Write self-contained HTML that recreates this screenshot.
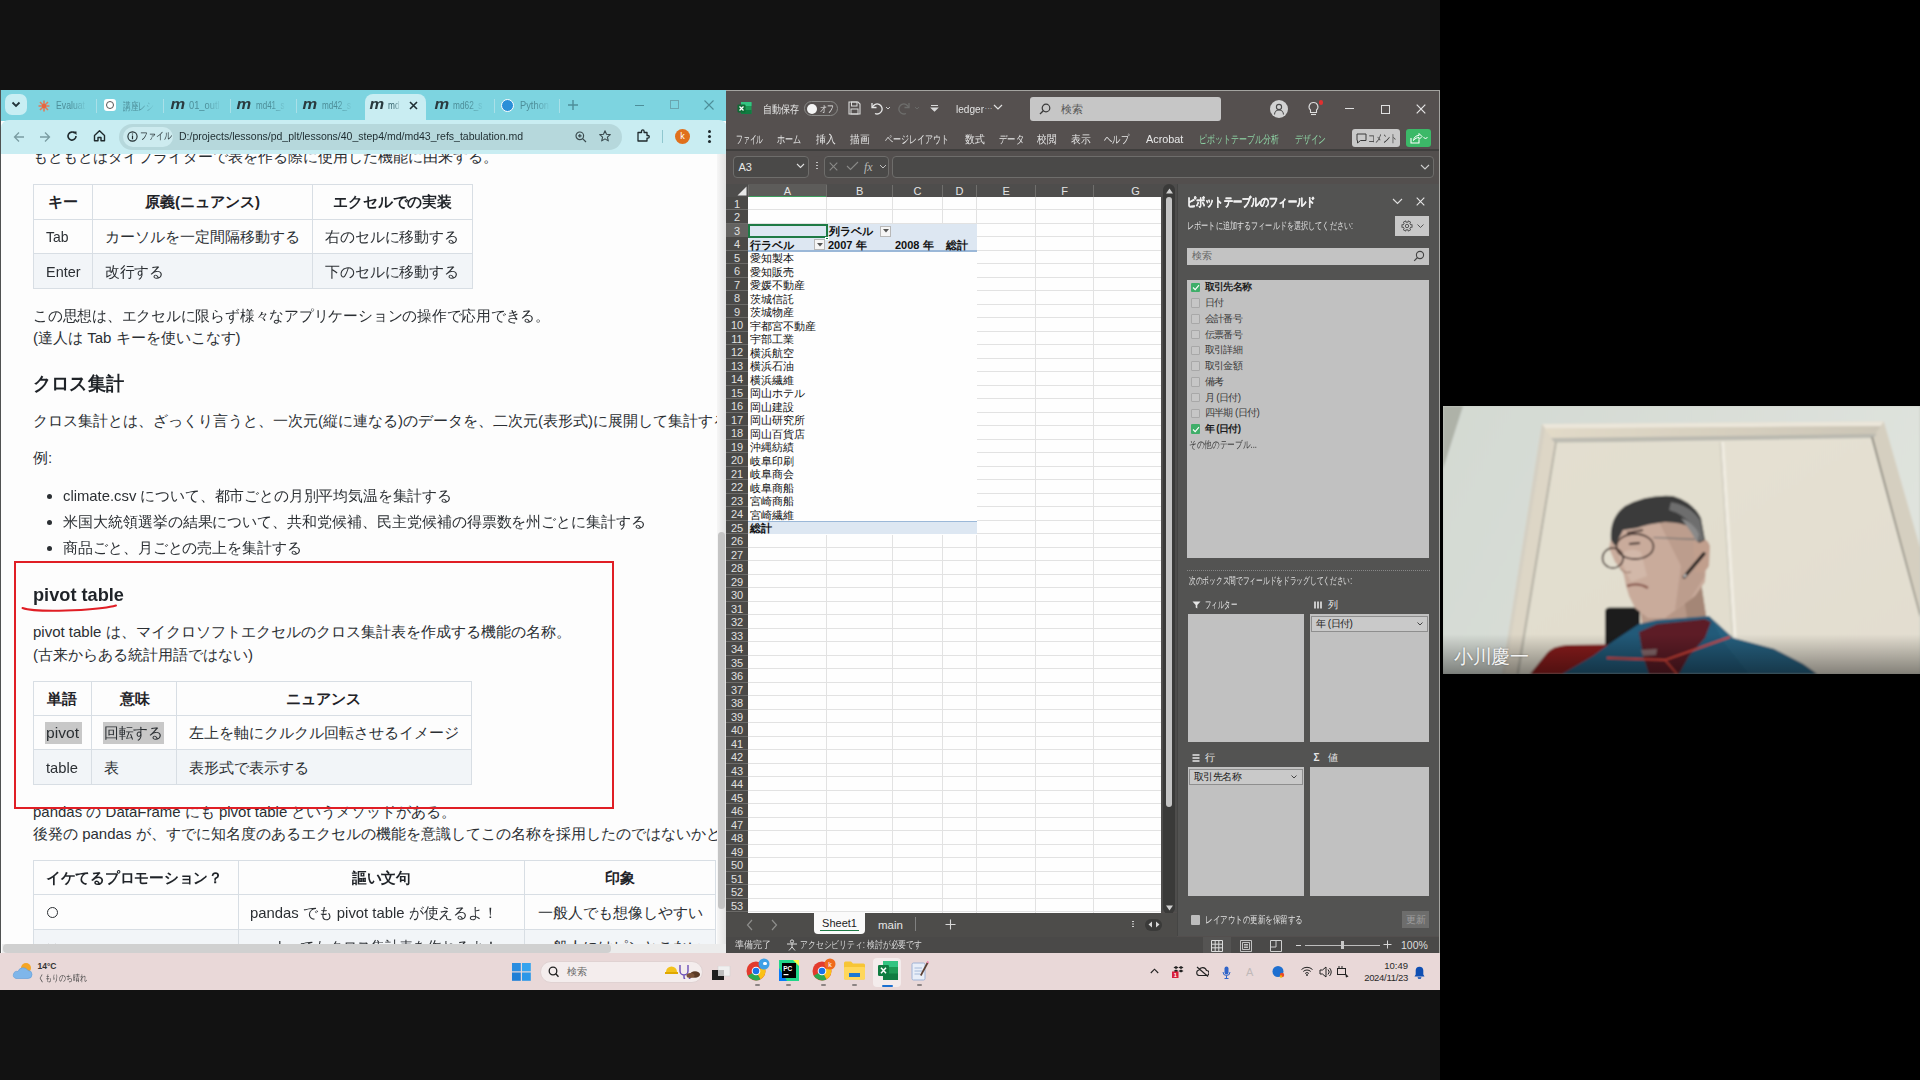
<!DOCTYPE html>
<html><head><meta charset="utf-8">
<style>
*{box-sizing:border-box}
html,body{margin:0;padding:0}
body{width:1920px;height:1080px;background:#000;position:relative;overflow:hidden;font-family:"Liberation Sans",sans-serif}
.a{position:absolute}
.nw{white-space:nowrap}
/* browser */
#br{left:0;top:90px;width:726px;height:863px;background:#fdfdfd;overflow:hidden;border-left:1px solid #505252}
#tabs{left:0;top:0;width:726px;height:31px;background:#7dd4e0}
#tool{left:0;top:30px;width:726px;height:34px;background:#c9edf2;border-radius:8px 8px 0 0}
.tt{font-size:11px;color:#4d8e99;top:9px;-webkit-mask-image:linear-gradient(90deg,#000 55%,rgba(0,0,0,0.15) 100%)}
.sep{width:1px;height:14px;top:9px;background:#a9e0e8}
.mi{font-family:"Liberation Sans",sans-serif;font-style:italic;font-weight:bold;font-size:15px;color:#2a3a3e;top:5px;letter-spacing:-1px;transform:scaleX(1.1)}
#content{left:0;top:64px;width:725px;height:799px;overflow:hidden;color:#2b2f33;font-size:15px}
.ln{position:absolute;white-space:nowrap;line-height:20px}
table.md{position:absolute;border-collapse:collapse;font-size:15px;color:#2b2f33}
table.md td,table.md th{border:1px solid #d5dbe0;padding:0 12px;height:34.5px;white-space:nowrap}
table.md th{font-weight:bold;text-align:center}
table.md tr.ev td{background:#f3f6f8}
/* excel */
#xl{left:726px;top:90px;width:714px;height:863px;background:#534f4e;border-top:1px solid #a4a4a0;border-right:1px solid #a4a4a0;overflow:hidden;color:#e8e8e8}
.xt{font-size:11px;color:#e6e6e6}
/* taskbar */
#tb{left:0;top:953px;width:1440px;height:37px;background:#e9d8d8}
</style></head>
<body>
<div class="a" style="left:0;top:0;width:1440px;height:90px;background:#121212"></div>
<div class="a" style="left:0;top:990px;width:1440px;height:90px;background:#121212"></div>

<!-- ================= BROWSER ================= -->
<div id="br" class="a">
<div id="tabs" class="a">
  <div class="a" style="left:4px;top:4px;width:22px;height:21px;border-radius:7px;background:#c8eef3"></div>
  <svg class="a" style="left:10px;top:11px" width="10" height="7" viewBox="0 0 10 7"><path d="M1.5 1.5 L5 5 L8.5 1.5" stroke="#22343a" stroke-width="1.8" fill="none"></path></svg>
  <svg class="a" style="left:37px;top:10px" width="12" height="12" viewBox="0 0 12 12"><g stroke="#e07a5a" stroke-width="1.6"><path d="M6 0.5V11.5M0.5 6H11.5M2 2L10 10M10 2L2 10"></path></g><circle cx="6" cy="6" r="2.2" fill="#e8653f"></circle></svg>
  <div class="a tt nw" style="left: 55px; transform: scaleX(0.7901); transform-origin: 0px 0px;">Evaluat</div>
  <div class="a sep" style="left:95px"></div>
  <div class="a" style="left:103px;top:9px;width:12px;height:12px;border-radius:3px;background:#fff"></div>
  <div class="a" style="left:105px;top:11px;width:8px;height:8px;border-radius:50%;border:1.5px solid #555"></div>
  <div class="a tt nw" style="left: 122px; transform: scaleX(0.7045); transform-origin: 0px 0px;">講座レシ</div>
  <div class="a sep" style="left:162px"></div>
  <div class="a mi" style="left:170px">m</div>
  <div class="a tt nw" style="left: 188px; transform: scaleX(0.8478); transform-origin: 0px 0px;">01_outl</div>
  <div class="a sep" style="left:229px"></div>
  <div class="a mi" style="left:236px">m</div>
  <div class="a tt nw" style="left: 255px; transform: scaleX(0.7281); transform-origin: 0px 0px;">md41_s</div>
  <div class="a sep" style="left:295px"></div>
  <div class="a mi" style="left:302px">m</div>
  <div class="a tt nw" style="left: 321px; transform: scaleX(0.7409); transform-origin: 0px 0px;">md42_s</div>
  <div class="a" style="left:364px;top:4px;width:61px;height:28px;border-radius:8px 8px 0 0;background:#c9edf2"></div>
  <div class="a mi" style="left:369px">m</div>
  <div class="a tt nw" style="left: 387px; color: rgb(58, 103, 112); transform: scaleX(0.7526); transform-origin: 0px 0px;">md</div>
  <svg class="a" style="left:408px;top:11px" width="9" height="9" viewBox="0 0 9 9"><path d="M1 1L8 8M8 1L1 8" stroke="#1f2e33" stroke-width="1.6"></path></svg>
  <div class="a mi" style="left:434px">m</div>
  <div class="a tt nw" style="left: 452px; transform: scaleX(0.7537); transform-origin: 0px 0px;">md62_s</div>
  <div class="a sep" style="left:493px"></div>
  <div class="a" style="left:500px;top:9px;width:13px;height:13px;border-radius:50%;background:#2a8fd8;border:1.5px solid #fff"></div>
  <div class="a tt nw" style="left: 519px; transform: scaleX(0.8467); transform-origin: 0px 0px;">Python</div>
  <div class="a sep" style="left:558px"></div>
  <svg class="a" style="left:567px;top:10px" width="10" height="10" viewBox="0 0 10 10"><path d="M5 0V10M0 5H10" stroke="#4d8e99" stroke-width="1.4"></path></svg>
  <div class="a" style="left:634px;top:15px;width:9px;height:1px;background:#4d8e99"></div>
  <div class="a" style="left:669px;top:10px;width:9px;height:9px;border:1px solid #6aa6b0"></div>
  <svg class="a" style="left:703px;top:10px" width="10" height="10" viewBox="0 0 10 10"><path d="M0.5 0.5L9.5 9.5M9.5 0.5L0.5 9.5" stroke="#4d8e99" stroke-width="1.1"></path></svg>
 </div>
 <div id="tool" class="a">
  <svg class="a" style="left:12px;top:11px" width="12" height="12" viewBox="0 0 12 12"><path d="M11 6H1.5M6 1.5L1.5 6L6 10.5" stroke="#7a9ca2" stroke-width="1.3" fill="none"></path></svg>
  <svg class="a" style="left:38px;top:11px" width="12" height="12" viewBox="0 0 12 12"><path d="M1 6H10.5M6 1.5L10.5 6L6 10.5" stroke="#7a9ca2" stroke-width="1.3" fill="none"></path></svg>
  <svg class="a" style="left:65px;top:10px" width="12" height="12" viewBox="0 0 12 12"><path d="M10 6A4 4 0 1 1 8.8 3.2" stroke="#1f2a2d" stroke-width="1.6" fill="none"></path><path d="M7 1.5L10.5 1.5L10.5 5Z" fill="#1f2a2d"></path></svg>
  <svg class="a" style="left:92px;top:9px" width="13" height="13" viewBox="0 0 13 13"><path d="M1.5 6.5L6.5 1.8L11.5 6.5V11.8H8V8.5H5V11.8H1.5Z" stroke="#1f2a2d" stroke-width="1.4" fill="none" stroke-linejoin="round"></path></svg>
  <div class="a" style="left:118px;top:4px;width:503px;height:26px;border-radius:13px;background:#b6d8dc"></div>
  <div class="a" style="left:122px;top:7px;width:50px;height:20px;border-radius:10px;background:#cdebef"></div>
  <svg class="a" style="left:126px;top:11px" width="11" height="11" viewBox="0 0 11 11"><circle cx="5.5" cy="5.5" r="4.6" stroke="#1f2a2d" stroke-width="1.1" fill="none"></circle><path d="M5.5 4.5V8.2M5.5 2.6V3.4" stroke="#1f2a2d" stroke-width="1.2"></path></svg>
  <div class="a nw" style="left: 139px; top: 9px; font-size: 10px; color: rgb(31, 42, 45); transform: scaleX(0.8); transform-origin: 0px 0px;">ファイル</div>
  <div class="a nw" style="left: 178px; top: 10px; font-size: 11.5px; color: rgb(29, 43, 47); transform: scaleX(0.9136); transform-origin: 0px 0px;">D:/projects/lessons/pd_plt/lessons/40_step4/md/md43_refs_tabulation.md</div>
  <svg class="a" style="left:574px;top:11px" width="12" height="12" viewBox="0 0 12 12"><circle cx="4.8" cy="4.8" r="3.8" stroke="#3a4a4e" stroke-width="1.2" fill="none"></circle><path d="M7.6 7.6L11 11M3 4.8H6.6M4.8 3V6.6" stroke="#3a4a4e" stroke-width="1.2"></path></svg>
  <svg class="a" style="left:598px;top:10px" width="12" height="12" viewBox="0 0 12 12"><path d="M6 0.8L7.5 4.3L11.3 4.6L8.4 7.1L9.3 10.9L6 8.9L2.7 10.9L3.6 7.1L0.7 4.6L4.5 4.3Z" stroke="#3a4a4e" stroke-width="1.1" fill="none" stroke-linejoin="round"></path></svg>
  <svg class="a" style="left:635px;top:9px" width="14" height="14" viewBox="0 0 14 14"><path d="M2 3.5H5.5V2.2A1.3 1.3 0 0 1 8.1 2.2V3.5H11V6.5H12A1.3 1.3 0 0 1 12 9.1H11V12H2Z" stroke="#1f2a2d" stroke-width="1.3" fill="none" stroke-linejoin="round"></path></svg>
  <div class="a" style="left:661px;top:10px;width:1px;height:13px;background:#8fc7cf"></div>
  <div class="a" style="left:674px;top:9px;width:15px;height:15px;border-radius:50%;background:#e0701c;color:#fff;font-size:9px;text-align:center;line-height:15px">k</div>
  <div class="a" style="left:707px;top:10px;width:3px;height:3px;border-radius:50%;background:#1f2a2d;box-shadow:0 5px 0 #1f2a2d,0 10px 0 #1f2a2d"></div>
 </div>
 <div id="content" class="a">
<div class="ln" style="left:32px;top:-7.5px;font-size:15px;line-height:20px;">もともとはタイプライターで表を作る際に使用した機能に由来する。</div>
<div class="a" style="left:32px;top:30.5px;width:439.5px;height:103.8px;background:#fdfdfd"></div>
<div class="a" style="left:32px;top:99.7px;width:439.5px;height:34.6px;background:#f2f5f8"></div>
<div class="a" style="left:32px;top:30.0px;width:440.0px;height:1.0px;background:#d8dee4"></div>
<div class="a" style="left:32px;top:64.6px;width:440.0px;height:1.0px;background:#d8dee4"></div>
<div class="a" style="left:32px;top:99.2px;width:440.0px;height:1.0px;background:#d8dee4"></div>
<div class="a" style="left:32px;top:133.8px;width:440.0px;height:1.0px;background:#d8dee4"></div>
<div class="a" style="left:31.5px;top:30.5px;width:1.0px;height:103.8px;background:#d8dee4"></div>
<div class="a" style="left:90.5px;top:30.5px;width:1.0px;height:103.8px;background:#d8dee4"></div>
<div class="a" style="left:311.0px;top:30.5px;width:1.0px;height:103.8px;background:#d8dee4"></div>
<div class="a" style="left:471.0px;top:30.5px;width:1.0px;height:103.8px;background:#d8dee4"></div>
<div class="ln" style="left: 46.5px; top: 38px; font-size: 15px; line-height: 20px; font-weight: bold; color: rgb(31, 35, 40); transform: scaleX(1); transform-origin: 0px 0px;">キー</div>
<div class="ln" style="left: 144px; top: 38px; font-size: 15px; line-height: 20px; font-weight: bold; color: rgb(31, 35, 40); transform: scaleX(1); transform-origin: 0px 0px;">原義(ニュアンス)</div>
<div class="ln" style="left: 332px; top: 38px; font-size: 15px; line-height: 20px; font-weight: bold; color: rgb(31, 35, 40); transform: scaleX(0.9917); transform-origin: 0px 0px;">エクセルでの実装</div>
<div class="ln" style="left: 44.5px; top: 73px; font-size: 15px; line-height: 20px; transform: scaleX(0.9302); transform-origin: 0px 0px;">Tab</div>
<div class="ln" style="left: 104px; top: 73px; font-size: 15px; line-height: 20px; transform: scaleX(1); transform-origin: 0px 0px;">カーソルを一定間隔移動する</div>
<div class="ln" style="left: 324px; top: 73px; font-size: 15px; line-height: 20px; transform: scaleX(0.9926); transform-origin: 0px 0px;">右のセルに移動する</div>
<div class="ln" style="left: 44.5px; top: 107.5px; font-size: 15px; line-height: 20px; transform: scaleX(0.9621); transform-origin: 0px 0px;">Enter</div>
<div class="ln" style="left: 104px; top: 107.5px; font-size: 15px; line-height: 20px; transform: scaleX(0.9833); transform-origin: 0px 0px;">改行する</div>
<div class="ln" style="left: 324px; top: 107.5px; font-size: 15px; line-height: 20px; transform: scaleX(0.9926); transform-origin: 0px 0px;">下のセルに移動する</div>
<div class="ln" style="left: 32px; top: 151.5px; font-size: 15px; line-height: 20px; transform: scaleX(0.9848); transform-origin: 0px 0px;">この思想は、エクセルに限らず様々なアプリケーションの操作で応用できる。</div>
<div class="ln" style="left:32px;top:174.0px;font-size:15px;line-height:20px;">(達人は Tab キーを使いこなす)</div>
<div class="ln" style="left: 32px; top: 218px; font-size: 18.5px; line-height: 24px; font-weight: bold; color: rgb(31, 35, 40); transform: scaleX(0.9579); transform-origin: 0px 0px;">クロス集計</div>
<div class="ln" style="left:32px;top:257.0px;font-size:15px;line-height:20px;">クロス集計とは、ざっくり言うと、一次元(縦に連なる)のデータを、二次元(表形式)に展開して集計する。</div>
<div class="ln" style="left:32px;top:294.0px;font-size:15px;line-height:20px;">例:</div>
<div class="a" style="left:46px;top:339.5px;width:5px;height:5.0px;border-radius:50%;background:#2b2f33"></div>
<div class="ln" style="left: 62px; top: 332px; font-size: 15px; line-height: 20px; transform: scaleX(0.9889); transform-origin: 0px 0px;">climate.csv について、都市ごとの月別平均気温を集計する</div>
<div class="a" style="left:46px;top:365.5px;width:5px;height:5.0px;border-radius:50%;background:#2b2f33"></div>
<div class="ln" style="left: 62px; top: 358px; font-size: 15px; line-height: 20px; transform: scaleX(0.9966); transform-origin: 0px 0px;">米国大統領選挙の結果について、共和党候補、民主党候補の得票数を州ごとに集計する</div>
<div class="a" style="left:46px;top:391.5px;width:5px;height:5.0px;border-radius:50%;background:#2b2f33"></div>
<div class="ln" style="left: 62px; top: 384px; font-size: 15px; line-height: 20px; transform: scaleX(0.9958); transform-origin: 0px 0px;">商品ごと、月ごとの売上を集計する</div>
<div class="ln" style="left: 32px; top: 429px; font-size: 18.5px; line-height: 24px; font-weight: bold; color: rgb(31, 35, 40); transform: scaleX(0.9836); transform-origin: 0px 0px;">pivot table</div>
<div class="ln" style="left:32px;top:468.0px;font-size:15px;line-height:20px;">pivot table は、マイクロソフトエクセルのクロス集計表を作成する機能の名称。</div>
<div class="ln" style="left:32px;top:491.0px;font-size:15px;line-height:20px;">(古来からある統計用語ではない)</div>
<div class="a" style="left:32px;top:527.3px;width:438.5px;height:102.9px;background:#fdfdfd"></div>
<div class="a" style="left:32px;top:595.9px;width:438.5px;height:34.3px;background:#f2f5f8"></div>
<div class="a" style="left:32px;top:526.8px;width:439.0px;height:1.0px;background:#d8dee4"></div>
<div class="a" style="left:32px;top:561.1px;width:439.0px;height:1.0px;background:#d8dee4"></div>
<div class="a" style="left:32px;top:595.4px;width:439.0px;height:1.0px;background:#d8dee4"></div>
<div class="a" style="left:32px;top:629.7px;width:439.0px;height:1.0px;background:#d8dee4"></div>
<div class="a" style="left:31.5px;top:527.3px;width:1.0px;height:102.9px;background:#d8dee4"></div>
<div class="a" style="left:90.0px;top:527.3px;width:1.0px;height:102.9px;background:#d8dee4"></div>
<div class="a" style="left:175.2px;top:527.3px;width:1.0px;height:102.9px;background:#d8dee4"></div>
<div class="a" style="left:470.0px;top:527.3px;width:1.0px;height:102.9px;background:#d8dee4"></div>
<div class="a" style="left:44px;top:568px;width:37px;height:22px;background:#c8c8c8"></div>
<div class="a" style="left:102px;top:568px;width:61px;height:22px;background:#c8c8c8"></div>
<div class="ln" style="left: 46px; top: 534.5px; font-size: 15px; line-height: 20px; font-weight: bold; color: rgb(31, 35, 40); transform: scaleX(1); transform-origin: 0px 0px;">単語</div>
<div class="ln" style="left: 118.5px; top: 534.5px; font-size: 15px; line-height: 20px; font-weight: bold; color: rgb(31, 35, 40); transform: scaleX(1); transform-origin: 0px 0px;">意味</div>
<div class="ln" style="left: 285px; top: 534.5px; font-size: 15px; line-height: 20px; font-weight: bold; color: rgb(31, 35, 40); transform: scaleX(1); transform-origin: 0px 0px;">ニュアンス</div>
<div class="ln" style="left: 44.5px; top: 569px; font-size: 15px; line-height: 20px; transform: scaleX(1.0414); transform-origin: 0px 0px;">pivot</div>
<div class="ln" style="left: 103px; top: 569px; font-size: 15px; line-height: 20px; transform: scaleX(0.9833); transform-origin: 0px 0px;">回転する</div>
<div class="ln" style="left: 188px; top: 569px; font-size: 15px; line-height: 20px; transform: scaleX(1); transform-origin: 0px 0px;">左上を軸にクルクル回転させるイメージ</div>
<div class="ln" style="left: 44.5px; top: 603.5px; font-size: 15px; line-height: 20px; transform: scaleX(0.9837); transform-origin: 0px 0px;">table</div>
<div class="ln" style="left: 103px; top: 603.5px; font-size: 15px; line-height: 20px; transform: scaleX(1); transform-origin: 0px 0px;">表</div>
<div class="ln" style="left: 188px; top: 603.5px; font-size: 15px; line-height: 20px; transform: scaleX(1); transform-origin: 0px 0px;">表形式で表示する</div>
<div class="ln" style="left:32px;top:648.0px;font-size:15px;line-height:20px;">pandas の DataFrame にも pivot table というメソッドがある。</div>
<div class="ln" style="left:32px;top:670.0px;font-size:15px;line-height:20px;">後発の pandas が、すでに知名度のあるエクセルの機能を意識してこの名称を採用したのではないかと思われる。</div>
<div class="a" style="left:32px;top:706px;width:682.5px;height:103.5px;background:#fdfdfd"></div>
<div class="a" style="left:32px;top:775.0px;width:682.5px;height:34.5px;background:#f2f5f8"></div>
<div class="a" style="left:32px;top:705.5px;width:683.0px;height:1.0px;background:#d8dee4"></div>
<div class="a" style="left:32px;top:740.0px;width:683.0px;height:1.0px;background:#d8dee4"></div>
<div class="a" style="left:32px;top:774.5px;width:683.0px;height:1.0px;background:#d8dee4"></div>
<div class="a" style="left:32px;top:809.0px;width:683.0px;height:1.0px;background:#d8dee4"></div>
<div class="a" style="left:31.5px;top:706px;width:1.0px;height:103.5px;background:#d8dee4"></div>
<div class="a" style="left:236.5px;top:706px;width:1.0px;height:103.5px;background:#d8dee4"></div>
<div class="a" style="left:522.5px;top:706px;width:1.0px;height:103.5px;background:#d8dee4"></div>
<div class="a" style="left:714.0px;top:706px;width:1.0px;height:103.5px;background:#d8dee4"></div>
<div class="ln" style="left: 45px; top: 713.5px; font-size: 15px; line-height: 20px; font-weight: bold; color: rgb(31, 35, 40); transform: scaleX(0.9833); transform-origin: 0px 0px;">イケてるプロモーション？</div>
<div class="ln" style="left: 351px; top: 713.5px; font-size: 15px; line-height: 20px; font-weight: bold; color: rgb(31, 35, 40); transform: scaleX(0.9833); transform-origin: 0px 0px;">謳い文句</div>
<div class="ln" style="left: 604px; top: 713.5px; font-size: 15px; line-height: 20px; font-weight: bold; color: rgb(31, 35, 40); transform: scaleX(1); transform-origin: 0px 0px;">印象</div>
<div class="a" style="left:45.5px;top:752.5px;width:11.5px;height:11.5px;border:1.3px solid #2b2f33;border-radius:50%"></div>
<div class="ln" style="left: 249px; top: 748.5px; font-size: 15px; line-height: 20px; transform: scaleX(0.9916); transform-origin: 0px 0px;">pandas でも pivot table が使えるよ！</div>
<div class="ln" style="left: 537px; top: 748.5px; font-size: 15px; line-height: 20px; transform: scaleX(1); transform-origin: 0px 0px;">一般人でも想像しやすい</div>
<div class="ln" style="left: 45px; top: 783px; font-size: 15px; line-height: 20px; transform: scaleX(1.369); transform-origin: 0px 0px;">×</div>
<div class="ln" style="left: 249px; top: 783px; font-size: 15px; line-height: 20px; transform: scaleX(0.9416); transform-origin: 0px 0px;">pandas でもクロス集計表を作れるよ！</div>
<div class="ln" style="left: 537px; top: 783px; font-size: 15px; line-height: 20px; transform: scaleX(1); transform-origin: 0px 0px;">一般人にはピンとこない</div>
<div class="a" style="left:12.5px;top:406.5px;width:600.0px;height:248.0px;border:2.3px solid #e01e25"></div>
<svg class="a" style="left:0;top:446px" width="140" height="16" viewBox="0 0 140 16"><path d="M21.5 8 C 30 11, 50 11.5, 80 10 C 95 9, 108 7.5, 115 5.5" stroke="#e01e25" stroke-width="2" fill="none" stroke-linecap="round"></path></svg>
<div class="a" style="left:716px;top:0px;width:9px;height:790px;background:linear-gradient(90deg,#f6f6f6,#e2e2e2)"></div>
<div class="a" style="left:716.5px;top:378px;width:7.5px;height:377px;border-radius:4px;background:#c4c4c4"></div>
<div class="a" style="left:1px;top:789.8px;width:724px;height:9.0px;background:#ececec"></div>
<div class="a" style="left:2px;top:789.8px;width:608px;height:9.0px;border-radius:4px;background:#d0d0d0"></div>
<div class="a" style="left:0px;top:798.8px;width:726px;height:1.2px;background:#9a9a9a"></div>
<div class="a" style="left:724.5px;top:0px;width:1.5px;height:799px;background:#858585"></div>
</div>
</div>
<div id="xl" class="a">
<div class="a" style="left:0px;top:0px;width:714px;height:58px;background:#55504f"></div>
<svg class="a" style="left:11px;top:10px;" width="15" height="14" viewBox="0 0 15 14"><rect x="4" y="1" width="10.5" height="12" rx="1.2" fill="#1d9a55"></rect><rect x="4" y="1" width="10.5" height="4" fill="#33c481"></rect><rect x="4" y="9" width="10.5" height="4" fill="#107c41"></rect><rect x="0.5" y="3.5" width="8" height="8" rx="1" fill="#0f6b35"></rect><path d="M2.5 5.5L6.5 9.5M6.5 5.5L2.5 9.5" stroke="#fff" stroke-width="1.3"></path></svg>
<div class="a nw" style="left: 36.7px; top: 10.5px; font-size: 11px; line-height: 14px; color: rgb(232, 232, 232); transform: scaleX(0.8182); transform-origin: 0px 0px;">自動保存</div>
<div class="a" style="left:78px;top:10px;width:34px;height:15px;border:1px solid #8a8a88;border-radius:8px"></div>
<div class="a" style="left:80.5px;top:12.5px;width:10.5px;height:10.5px;background:#f4f4f4;border-radius:50%"></div>
<div class="a nw" style="left: 94px; top: 10.5px; font-size: 10px; line-height: 14px; color: rgb(232, 232, 232); transform: scaleX(0.7); transform-origin: 0px 0px;">オフ</div>
<svg class="a" style="left:122px;top:10px;" width="13" height="14" viewBox="0 0 13 14"><path d="M1 1H10L12 3V13H1Z" stroke="#dcdcdc" stroke-width="1.1" fill="none"></path><rect x="3.5" y="1" width="5.5" height="4" stroke="#dcdcdc" stroke-width="1" fill="none"></rect><rect x="3" y="8" width="7" height="5" stroke="#dcdcdc" stroke-width="1" fill="none"></rect></svg>
<svg class="a" style="left:143px;top:10px;" width="24" height="14" viewBox="0 0 24 14"><path d="M3 2V6.5H7.5" stroke="#e6e6e6" stroke-width="1.3" fill="none"></path><path d="M3.5 6A5 5 0 1 1 6 12.5" stroke="#e6e6e6" stroke-width="1.3" fill="none"></path><path d="M17 6L19 8L21 6" stroke="#cfcfcf" stroke-width="1" fill="none"></path></svg>
<svg class="a" style="left:172px;top:10px;" width="24" height="14" viewBox="0 0 24 14"><path d="M11 2V6.5H6.5" stroke="#6e6e6c" stroke-width="1.3" fill="none"></path><path d="M10.5 6A5 5 0 1 0 8 12.5" stroke="#6e6e6c" stroke-width="1.3" fill="none"></path><path d="M17 6L19 8L21 6" stroke="#6a6a68" stroke-width="1" fill="none"></path></svg>
<svg class="a" style="left:204px;top:13px;" width="9" height="9" viewBox="0 0 9 9"><path d="M1 1.5H8M1.5 4L4.5 7L7.5 4Z" stroke="#d8d8d8" stroke-width="1.1" fill="#d8d8d8"></path></svg>
<div class="a nw" style="left: 229.7px; top: 11px; font-size: 11.5px; line-height: 14px; color: rgb(226, 226, 226); transform: scaleX(0.8759); transform-origin: 0px 0px;">ledger</div>
<div class="a nw" style="left:258.5px;top:11.0px;font-size:8px;line-height:14px;color:#d0d0d0;">···</div>
<svg class="a" style="left:267px;top:13px;" width="10" height="7" viewBox="0 0 10 7"><path d="M1 1L5 5L9 1" stroke="#e2e2e2" stroke-width="1.2" fill="none"></path></svg>
<div class="a" style="left:304px;top:6px;width:191px;height:23.5px;background:#c6c6c6;border-radius:3px"></div>
<svg class="a" style="left:313px;top:12px;" width="12" height="12" viewBox="0 0 12 12"><circle cx="7" cy="5" r="3.8" stroke="#3a3a3a" stroke-width="1.2" fill="none"></circle><path d="M4.3 7.7L1 11" stroke="#3a3a3a" stroke-width="1.3"></path></svg>
<div class="a nw" style="left:335px;top:11.0px;font-size:10.5px;line-height:14px;color:#555;">検索</div>
<div class="a" style="left:544px;top:9px;width:18px;height:18px;background:#d2d2d2;border-radius:50%"></div>
<svg class="a" style="left:547px;top:12px;" width="12" height="12" viewBox="0 0 12 12"><circle cx="6" cy="4" r="2.6" stroke="#4a4a4a" stroke-width="1.1" fill="none"></circle><path d="M1.5 11.5A4.5 4.5 0 0 1 10.5 11.5" stroke="#4a4a4a" stroke-width="1.1" fill="none"></path></svg>
<svg class="a" style="left:581px;top:10px;" width="13" height="16" viewBox="0 0 13 16"><path d="M6.5 1.5A4.3 4.3 0 0 0 3.5 9V11.5H9.5V9A4.3 4.3 0 0 0 6.5 1.5Z" stroke="#dedede" stroke-width="1.1" fill="none"></path><path d="M4 13.5H9" stroke="#dedede" stroke-width="1.1"></path></svg>
<div class="a" style="left:592.5px;top:9px;width:4.5px;height:4.5px;background:#e03030;border-radius:50%"></div>
<div class="a" style="left:619px;top:17px;width:9px;height:1px;background:#e0e0e0"></div>
<div class="a" style="left:655px;top:13.5px;width:9px;height:9.0px;border:1.2px solid #e0e0e0"></div>
<svg class="a" style="left:690px;top:13px;" width="10" height="10" viewBox="0 0 10 10"><path d="M0.7 0.7L9.3 9.3M9.3 0.7L0.7 9.3" stroke="#e6e6e6" stroke-width="1.2"></path></svg>
<div class="a nw" style="left: 9.7px; top: 41px; font-size: 11px; line-height: 14px; color: rgb(232, 232, 232); transform: scaleX(0.6205); transform-origin: 0px 0px;">ファイル</div>
<div class="a nw" style="left: 50.8px; top: 41px; font-size: 11px; line-height: 14px; color: rgb(232, 232, 232); transform: scaleX(0.7333); transform-origin: 0px 0px;">ホーム</div>
<div class="a nw" style="left: 89.8px; top: 41px; font-size: 11px; line-height: 14px; color: rgb(232, 232, 232); transform: scaleX(0.8909); transform-origin: 0px 0px;">挿入</div>
<div class="a nw" style="left: 123.8px; top: 41px; font-size: 11px; line-height: 14px; color: rgb(232, 232, 232); transform: scaleX(0.8773); transform-origin: 0px 0px;">描画</div>
<div class="a nw" style="left: 158.6px; top: 41px; font-size: 11px; line-height: 14px; color: rgb(232, 232, 232); transform: scaleX(0.7273); transform-origin: 0px 0px;">ページレイアウト</div>
<div class="a nw" style="left: 239px; top: 41px; font-size: 11px; line-height: 14px; color: rgb(232, 232, 232); transform: scaleX(0.8909); transform-origin: 0px 0px;">数式</div>
<div class="a nw" style="left: 272.6px; top: 41px; font-size: 11px; line-height: 14px; color: rgb(232, 232, 232); transform: scaleX(0.7576); transform-origin: 0px 0px;">データ</div>
<div class="a nw" style="left: 310.7px; top: 41px; font-size: 11px; line-height: 14px; color: rgb(232, 232, 232); transform: scaleX(0.8773); transform-origin: 0px 0px;">校閲</div>
<div class="a nw" style="left: 345px; top: 41px; font-size: 11px; line-height: 14px; color: rgb(232, 232, 232); transform: scaleX(0.8909); transform-origin: 0px 0px;">表示</div>
<div class="a nw" style="left: 378px; top: 41px; font-size: 11px; line-height: 14px; color: rgb(232, 232, 232); transform: scaleX(0.7576); transform-origin: 0px 0px;">ヘルプ</div>
<div class="a nw" style="left: 419.6px; top: 41px; font-size: 11px; line-height: 14px; color: rgb(232, 232, 232); transform: scaleX(0.9862); transform-origin: 0px 0px;">Acrobat</div>
<div class="a nw" style="left: 473px; top: 41px; font-size: 11px; line-height: 14px; color: rgb(143, 214, 166); transform: scaleX(0.7245); transform-origin: 0px 0px;">ピボットテーブル分析</div>
<div class="a nw" style="left: 568.7px; top: 41px; font-size: 11px; line-height: 14px; color: rgb(143, 214, 166); transform: scaleX(0.7114); transform-origin: 0px 0px;">デザイン</div>
<div class="a" style="left:626px;top:38px;width:48px;height:18px;background:#c9c9c9;border-radius:3px"></div>
<svg class="a" style="left:630px;top:42px;" width="11" height="11" viewBox="0 0 11 11"><path d="M1 1H10V7.5H4.5L1.5 10V7.5H1Z" stroke="#3a3a3a" stroke-width="1" fill="none"></path></svg>
<div class="a nw" style="left: 642px; top: 40px; font-size: 10.5px; line-height: 14px; color: rgb(46, 46, 46); transform: scaleX(0.6591); transform-origin: 0px 0px;">コメント</div>
<div class="a" style="left:680px;top:38px;width:25px;height:18px;background:#3cb968;border-radius:3px"></div>
<svg class="a" style="left:683px;top:40px;" width="20" height="14" viewBox="0 0 20 14"><path d="M2 7V12H10V9" stroke="#fff" stroke-width="1.1" fill="none"></path><path d="M4.5 9.5C5 6 7 4.5 10 4.5V2.5L13 5.5L10 8.5V6.5C8 6.5 6 7.5 4.5 9.5Z" stroke="#fff" stroke-width="1" fill="none"></path><path d="M14.5 6L16.5 8L18.5 6" stroke="#fff" stroke-width="1" fill="none"></path></svg>
<div class="a" style="left:0px;top:58px;width:714px;height:1.5px;background:#3f3e3d"></div>
<div class="a" style="left:7px;top:64.6px;width:76px;height:22.4px;border:1px solid #6e6d6b;border-radius:4px;background:#4a4948"></div>
<div class="a nw" style="left:12.5px;top:69.0px;font-size:11px;line-height:14px;color:#e6e6e6;">A3</div>
<svg class="a" style="left:70px;top:72px;" width="9" height="6" viewBox="0 0 9 6"><path d="M1 1L4.5 4.5L8 1" stroke="#e0e0e0" stroke-width="1.1" fill="none"></path></svg>
<div class="a" style="left:90px;top:70.5px;width:1.5px;height:1.5px;background:#cfcfcf;border-radius:50%;box-shadow:0 3px 0 #cfcfcf,0 6px 0 #cfcfcf"></div>
<div class="a" style="left:98px;top:64.6px;width:64.5px;height:22.4px;border:1px solid #6e6d6b;border-radius:4px;background:#4a4948"></div>
<svg class="a" style="left:103px;top:71px;" width="9" height="9" viewBox="0 0 9 9"><path d="M0.7 0.7L8.3 8.3M8.3 0.7L0.7 8.3" stroke="#8a8a88" stroke-width="1.1"></path></svg>
<svg class="a" style="left:120px;top:70px;" width="13" height="10" viewBox="0 0 13 10"><path d="M1 5L4.5 8.5L12 1" stroke="#8a8a88" stroke-width="1.1" fill="none"></path></svg>
<div class="a nw" style="left:138px;top:69.0px;font-size:12px;line-height:14px;color:#b9b9b7;font-family:'Liberation Serif',serif"><i>fx</i></div>
<svg class="a" style="left:153px;top:73px;" width="8" height="5" viewBox="0 0 8 5"><path d="M1 1L4 4L7 1" stroke="#c0c0c0" stroke-width="1" fill="none"></path></svg>
<div class="a" style="left:166px;top:64.6px;width:541.5px;height:22.4px;border:1px solid #6e6d6b;border-radius:4px;background:#4a4948"></div>
<svg class="a" style="left:694px;top:73px;" width="10" height="6" viewBox="0 0 10 6"><path d="M1 1L5 5L9 1" stroke="#cfcfcf" stroke-width="1.1" fill="none"></path></svg>
<div class="a" style="left:0px;top:92.7px;width:435px;height:13.3px;background:#4e4d4c"></div>
<svg class="a" style="left:11px;top:95px;" width="10" height="10" viewBox="0 0 10 10"><path d="M9.5 0.5V9.5H0.5Z" fill="#e8e8e8"></path></svg>
<div class="a" style="left:22px;top:92.7px;width:78.8px;height:13.3px;background:#5d5c5a;border-bottom:1.5px solid #3e9e5e"></div>
<div class="a nw" style="left:22px;top:92.5px;width:78.8px;text-align:center;font-size:11px;line-height:14px;color:#e4e4e4">A</div>
<div class="a nw" style="left:100.8px;top:92.5px;width:65.6px;text-align:center;font-size:11px;line-height:14px;color:#e4e4e4">B</div>
<div class="a" style="left:100.3px;top:93.5px;width:1.0px;height:12.5px;background:#6f6e6c"></div>
<div class="a nw" style="left:166.4px;top:92.5px;width:50.0px;text-align:center;font-size:11px;line-height:14px;color:#e4e4e4">C</div>
<div class="a" style="left:165.9px;top:93.5px;width:1.0px;height:12.5px;background:#6f6e6c"></div>
<div class="a nw" style="left:216.4px;top:92.5px;width:34.4px;text-align:center;font-size:11px;line-height:14px;color:#e4e4e4">D</div>
<div class="a" style="left:215.9px;top:93.5px;width:1.0px;height:12.5px;background:#6f6e6c"></div>
<div class="a nw" style="left:250.8px;top:92.5px;width:58.7px;text-align:center;font-size:11px;line-height:14px;color:#e4e4e4">E</div>
<div class="a" style="left:250.3px;top:93.5px;width:1.0px;height:12.5px;background:#6f6e6c"></div>
<div class="a nw" style="left:309.5px;top:92.5px;width:58.1px;text-align:center;font-size:11px;line-height:14px;color:#e4e4e4">F</div>
<div class="a" style="left:309.0px;top:93.5px;width:1.0px;height:12.5px;background:#6f6e6c"></div>
<div class="a nw" style="left:367.6px;top:92.5px;width:83.8px;text-align:center;font-size:11px;line-height:14px;color:#e4e4e4">G</div>
<div class="a" style="left:367.1px;top:93.5px;width:1.0px;height:12.5px;background:#6f6e6c"></div>
<div class="a" style="left:21.5px;top:93.5px;width:1.0px;height:12.5px;background:#6f6e6c"></div>
<div class="a" style="left:22px;top:106px;width:412.5px;height:715.5px;background:repeating-linear-gradient(180deg,#fefefe 0,#fefefe 12.5px,#e2e2e2 12.5px,#e2e2e2 13.5px)"></div>
<div class="a" style="left:100.3px;top:106px;width:1.0px;height:715.5px;background:#e2e2e2"></div>
<div class="a" style="left:165.9px;top:106px;width:1.0px;height:715.5px;background:#e2e2e2"></div>
<div class="a" style="left:215.9px;top:106px;width:1.0px;height:715.5px;background:#e2e2e2"></div>
<div class="a" style="left:250.3px;top:106px;width:1.0px;height:715.5px;background:#e2e2e2"></div>
<div class="a" style="left:309.0px;top:106px;width:1.0px;height:715.5px;background:#e2e2e2"></div>
<div class="a" style="left:367.1px;top:106px;width:1.0px;height:715.5px;background:#e2e2e2"></div>
<div class="a" style="left:0px;top:106px;width:22px;height:715.5px;background:repeating-linear-gradient(180deg,#4a4947 0,#4a4947 12.5px,#6b6a68 12.5px,#6b6a68 13.5px)"></div>
<div class="a" style="left:0px;top:133.0px;width:22px;height:12.5px;background:#646361"></div>
<div class="a nw" style="left:0;top:105.5px;width:22px;text-align:center;font-size:11px;line-height:14px;color:#e0e0e0">1</div>
<div class="a nw" style="left:0;top:119.0px;width:22px;text-align:center;font-size:11px;line-height:14px;color:#e0e0e0">2</div>
<div class="a nw" style="left:0;top:132.5px;width:22px;text-align:center;font-size:11px;line-height:14px;color:#e0e0e0">3</div>
<div class="a nw" style="left:0;top:146.0px;width:22px;text-align:center;font-size:11px;line-height:14px;color:#e0e0e0">4</div>
<div class="a nw" style="left:0;top:159.5px;width:22px;text-align:center;font-size:11px;line-height:14px;color:#e0e0e0">5</div>
<div class="a nw" style="left:0;top:173.0px;width:22px;text-align:center;font-size:11px;line-height:14px;color:#e0e0e0">6</div>
<div class="a nw" style="left:0;top:186.5px;width:22px;text-align:center;font-size:11px;line-height:14px;color:#e0e0e0">7</div>
<div class="a nw" style="left:0;top:200.0px;width:22px;text-align:center;font-size:11px;line-height:14px;color:#e0e0e0">8</div>
<div class="a nw" style="left:0;top:213.5px;width:22px;text-align:center;font-size:11px;line-height:14px;color:#e0e0e0">9</div>
<div class="a nw" style="left:0;top:227.0px;width:22px;text-align:center;font-size:11px;line-height:14px;color:#e0e0e0">10</div>
<div class="a nw" style="left:0;top:240.5px;width:22px;text-align:center;font-size:11px;line-height:14px;color:#e0e0e0">11</div>
<div class="a nw" style="left:0;top:254.0px;width:22px;text-align:center;font-size:11px;line-height:14px;color:#e0e0e0">12</div>
<div class="a nw" style="left:0;top:267.5px;width:22px;text-align:center;font-size:11px;line-height:14px;color:#e0e0e0">13</div>
<div class="a nw" style="left:0;top:281.0px;width:22px;text-align:center;font-size:11px;line-height:14px;color:#e0e0e0">14</div>
<div class="a nw" style="left:0;top:294.5px;width:22px;text-align:center;font-size:11px;line-height:14px;color:#e0e0e0">15</div>
<div class="a nw" style="left:0;top:308.0px;width:22px;text-align:center;font-size:11px;line-height:14px;color:#e0e0e0">16</div>
<div class="a nw" style="left:0;top:321.5px;width:22px;text-align:center;font-size:11px;line-height:14px;color:#e0e0e0">17</div>
<div class="a nw" style="left:0;top:335.0px;width:22px;text-align:center;font-size:11px;line-height:14px;color:#e0e0e0">18</div>
<div class="a nw" style="left:0;top:348.5px;width:22px;text-align:center;font-size:11px;line-height:14px;color:#e0e0e0">19</div>
<div class="a nw" style="left:0;top:362.0px;width:22px;text-align:center;font-size:11px;line-height:14px;color:#e0e0e0">20</div>
<div class="a nw" style="left:0;top:375.5px;width:22px;text-align:center;font-size:11px;line-height:14px;color:#e0e0e0">21</div>
<div class="a nw" style="left:0;top:389.0px;width:22px;text-align:center;font-size:11px;line-height:14px;color:#e0e0e0">22</div>
<div class="a nw" style="left:0;top:402.5px;width:22px;text-align:center;font-size:11px;line-height:14px;color:#e0e0e0">23</div>
<div class="a nw" style="left:0;top:416.0px;width:22px;text-align:center;font-size:11px;line-height:14px;color:#e0e0e0">24</div>
<div class="a nw" style="left:0;top:429.5px;width:22px;text-align:center;font-size:11px;line-height:14px;color:#e0e0e0">25</div>
<div class="a nw" style="left:0;top:443.0px;width:22px;text-align:center;font-size:11px;line-height:14px;color:#e0e0e0">26</div>
<div class="a nw" style="left:0;top:456.5px;width:22px;text-align:center;font-size:11px;line-height:14px;color:#e0e0e0">27</div>
<div class="a nw" style="left:0;top:470.0px;width:22px;text-align:center;font-size:11px;line-height:14px;color:#e0e0e0">28</div>
<div class="a nw" style="left:0;top:483.5px;width:22px;text-align:center;font-size:11px;line-height:14px;color:#e0e0e0">29</div>
<div class="a nw" style="left:0;top:497.0px;width:22px;text-align:center;font-size:11px;line-height:14px;color:#e0e0e0">30</div>
<div class="a nw" style="left:0;top:510.5px;width:22px;text-align:center;font-size:11px;line-height:14px;color:#e0e0e0">31</div>
<div class="a nw" style="left:0;top:524.0px;width:22px;text-align:center;font-size:11px;line-height:14px;color:#e0e0e0">32</div>
<div class="a nw" style="left:0;top:537.5px;width:22px;text-align:center;font-size:11px;line-height:14px;color:#e0e0e0">33</div>
<div class="a nw" style="left:0;top:551.0px;width:22px;text-align:center;font-size:11px;line-height:14px;color:#e0e0e0">34</div>
<div class="a nw" style="left:0;top:564.5px;width:22px;text-align:center;font-size:11px;line-height:14px;color:#e0e0e0">35</div>
<div class="a nw" style="left:0;top:578.0px;width:22px;text-align:center;font-size:11px;line-height:14px;color:#e0e0e0">36</div>
<div class="a nw" style="left:0;top:591.5px;width:22px;text-align:center;font-size:11px;line-height:14px;color:#e0e0e0">37</div>
<div class="a nw" style="left:0;top:605.0px;width:22px;text-align:center;font-size:11px;line-height:14px;color:#e0e0e0">38</div>
<div class="a nw" style="left:0;top:618.5px;width:22px;text-align:center;font-size:11px;line-height:14px;color:#e0e0e0">39</div>
<div class="a nw" style="left:0;top:632.0px;width:22px;text-align:center;font-size:11px;line-height:14px;color:#e0e0e0">40</div>
<div class="a nw" style="left:0;top:645.5px;width:22px;text-align:center;font-size:11px;line-height:14px;color:#e0e0e0">41</div>
<div class="a nw" style="left:0;top:659.0px;width:22px;text-align:center;font-size:11px;line-height:14px;color:#e0e0e0">42</div>
<div class="a nw" style="left:0;top:672.5px;width:22px;text-align:center;font-size:11px;line-height:14px;color:#e0e0e0">43</div>
<div class="a nw" style="left:0;top:686.0px;width:22px;text-align:center;font-size:11px;line-height:14px;color:#e0e0e0">44</div>
<div class="a nw" style="left:0;top:699.5px;width:22px;text-align:center;font-size:11px;line-height:14px;color:#e0e0e0">45</div>
<div class="a nw" style="left:0;top:713.0px;width:22px;text-align:center;font-size:11px;line-height:14px;color:#e0e0e0">46</div>
<div class="a nw" style="left:0;top:726.5px;width:22px;text-align:center;font-size:11px;line-height:14px;color:#e0e0e0">47</div>
<div class="a nw" style="left:0;top:740.0px;width:22px;text-align:center;font-size:11px;line-height:14px;color:#e0e0e0">48</div>
<div class="a nw" style="left:0;top:753.5px;width:22px;text-align:center;font-size:11px;line-height:14px;color:#e0e0e0">49</div>
<div class="a nw" style="left:0;top:767.0px;width:22px;text-align:center;font-size:11px;line-height:14px;color:#e0e0e0">50</div>
<div class="a nw" style="left:0;top:780.5px;width:22px;text-align:center;font-size:11px;line-height:14px;color:#e0e0e0">51</div>
<div class="a nw" style="left:0;top:794.0px;width:22px;text-align:center;font-size:11px;line-height:14px;color:#e0e0e0">52</div>
<div class="a nw" style="left:0;top:807.5px;width:22px;text-align:center;font-size:11px;line-height:14px;color:#e0e0e0">53</div>
<div class="a" style="left:22px;top:133.0px;width:229.3px;height:310.5px;background:#fefefe"></div>
<div class="a" style="left:22px;top:133.0px;width:228.8px;height:27.0px;background:#dde7f2"></div>
<div class="a" style="left:22px;top:159.0px;width:228.8px;height:1.5px;background:#9bb8d8"></div>
<div class="a" style="left:22px;top:429.5px;width:228.8px;height:13.0px;background:#dde7f2;border-top:1px solid #9bb8d8"></div>
<div class="a" style="left:21.5px;top:132.5px;width:80.0px;height:14.5px;border:2px solid #1e7a45"></div>
<div class="a" style="left:99px;top:145.5px;width:3.5px;height:3.5px;background:#1e7a45;border:1px solid #fff"></div>
<div class="a nw" style="left:103px;top:133.0px;font-size:11px;line-height:14px;color:#111;font-weight:bold;">列ラベル</div>
<div class="a" style="left:154px;top:134.5px;width:11px;height:11.0px;background:#f6f6f6;border:1px solid #b8b8b8"></div>
<svg class="a" style="left:156.5px;top:138.0px;" width="6" height="4" viewBox="0 0 6 4"><path d="M0 0H6L3 3.5Z" fill="#555"></path></svg>
<div class="a nw" style="left:24px;top:146.5px;font-size:11px;line-height:14px;color:#111;font-weight:bold;">行ラベル</div>
<div class="a" style="left:88px;top:148.0px;width:11px;height:10.5px;background:#f6f6f6;border:1px solid #b8b8b8"></div>
<svg class="a" style="left:90.5px;top:151.5px;" width="6" height="4" viewBox="0 0 6 4"><path d="M0 0H6L3 3.5Z" fill="#555"></path></svg>
<div class="a nw" style="left:102px;top:146.5px;font-size:11px;line-height:14px;color:#111;font-weight:bold;">2007 年</div>
<div class="a nw" style="left:169px;top:146.5px;font-size:11px;line-height:14px;color:#111;font-weight:bold;">2008 年</div>
<div class="a nw" style="left:220px;top:146.5px;font-size:11px;line-height:14px;color:#111;font-weight:bold;">総計</div>
<div class="a nw" style="left:24px;top:160.0px;font-size:11px;line-height:14px;color:#111;">愛知製本</div>
<div class="a nw" style="left:24px;top:173.5px;font-size:11px;line-height:14px;color:#111;">愛知販売</div>
<div class="a nw" style="left:24px;top:187.0px;font-size:11px;line-height:14px;color:#111;">愛媛不動産</div>
<div class="a nw" style="left:24px;top:200.5px;font-size:11px;line-height:14px;color:#111;">茨城信託</div>
<div class="a nw" style="left:24px;top:214.0px;font-size:11px;line-height:14px;color:#111;">茨城物産</div>
<div class="a nw" style="left:24px;top:227.5px;font-size:11px;line-height:14px;color:#111;">宇都宮不動産</div>
<div class="a nw" style="left:24px;top:241.0px;font-size:11px;line-height:14px;color:#111;">宇部工業</div>
<div class="a nw" style="left:24px;top:254.5px;font-size:11px;line-height:14px;color:#111;">横浜航空</div>
<div class="a nw" style="left:24px;top:268.0px;font-size:11px;line-height:14px;color:#111;">横浜石油</div>
<div class="a nw" style="left:24px;top:281.5px;font-size:11px;line-height:14px;color:#111;">横浜繊維</div>
<div class="a nw" style="left:24px;top:295.0px;font-size:11px;line-height:14px;color:#111;">岡山ホテル</div>
<div class="a nw" style="left:24px;top:308.5px;font-size:11px;line-height:14px;color:#111;">岡山建設</div>
<div class="a nw" style="left:24px;top:322.0px;font-size:11px;line-height:14px;color:#111;">岡山研究所</div>
<div class="a nw" style="left:24px;top:335.5px;font-size:11px;line-height:14px;color:#111;">岡山百貨店</div>
<div class="a nw" style="left:24px;top:349.0px;font-size:11px;line-height:14px;color:#111;">沖縄紡績</div>
<div class="a nw" style="left:24px;top:362.5px;font-size:11px;line-height:14px;color:#111;">岐阜印刷</div>
<div class="a nw" style="left:24px;top:376.0px;font-size:11px;line-height:14px;color:#111;">岐阜商会</div>
<div class="a nw" style="left:24px;top:389.5px;font-size:11px;line-height:14px;color:#111;">岐阜商船</div>
<div class="a nw" style="left:24px;top:403.0px;font-size:11px;line-height:14px;color:#111;">宮崎商船</div>
<div class="a nw" style="left:24px;top:416.5px;font-size:11px;line-height:14px;color:#111;">宮崎繊維</div>
<div class="a nw" style="left:24px;top:430.0px;font-size:11px;line-height:14px;color:#111;font-weight:bold;">総計</div>
<div class="a" style="left:435px;top:92.7px;width:16px;height:728.8px;background:#4e4d4c"></div>
<div class="a" style="left:437px;top:93px;width:12px;height:730px;background:#3a3a39;border-radius:6px"></div>
<svg class="a" style="left:439.5px;top:96.5px;" width="7" height="6" viewBox="0 0 7 6"><path d="M0 5.5L3.5 0.5L7 5.5Z" fill="#cfcfcf"></path></svg>
<div class="a" style="left:439.5px;top:105.7px;width:6.7px;height:610.8px;background:#c4c4c4;border-radius:4px"></div>
<svg class="a" style="left:439.5px;top:814px;" width="7" height="6" viewBox="0 0 7 6"><path d="M0 0.5L3.5 5.5L7 0.5Z" fill="#cfcfcf"></path></svg>
<div class="a" style="left:0px;top:821.5px;width:451px;height:24.0px;background:#4d4c4a"></div>
<svg class="a" style="left:20px;top:828px;" width="8" height="12" viewBox="0 0 8 12"><path d="M6 1L1.5 6L6 11" stroke="#8e8e8c" stroke-width="1.2" fill="none"></path></svg>
<svg class="a" style="left:44px;top:828px;" width="8" height="12" viewBox="0 0 8 12"><path d="M2 1L6.5 6L2 11" stroke="#8e8e8c" stroke-width="1.2" fill="none"></path></svg>
<div class="a" style="left:88px;top:821px;width:51px;height:21.5px;background:#fafafa;border-radius:0 0 4px 4px"></div>
<div class="a nw" style="left:88px;top:825px;width:51px;text-align:center;font-size:11px;line-height:14px;color:#222">Sheet1</div>
<div class="a" style="left:94px;top:838.5px;width:39px;height:1.5px;background:#1e7a45"></div>
<div class="a nw" style="left:152px;top:826.5px;font-size:11.5px;line-height:14px;color:#e6e6e6">main</div>
<div class="a" style="left:188.5px;top:826px;width:1.0px;height:14px;background:#808080"></div>
<svg class="a" style="left:219px;top:828px;" width="11" height="11" viewBox="0 0 11 11"><path d="M5.5 0.5V10.5M0.5 5.5H10.5" stroke="#d8d8d8" stroke-width="1.1"></path></svg>
<div class="a" style="left:406px;top:829.5px;width:1.5px;height:1.5px;background:#d0d0d0;box-shadow:0 2.5px 0 #d0d0d0,0 5px 0 #d0d0d0"></div>
<div class="a" style="left:419px;top:827.5px;width:17px;height:12.5px;background:#3a3a39;border-radius:6px"></div>
<svg class="a" style="left:422px;top:830px;" width="12" height="7" viewBox="0 0 12 7"><path d="M4 0.5V6.5L0.5 3.5Z M8 0.5V6.5L11.5 3.5Z" fill="#d8d8d8"></path></svg>
<div class="a" style="left:0px;top:845.5px;width:714px;height:16.5px;background:#4a4948"></div>
<div class="a nw" style="left: 9px; top: 847px; font-size: 10px; line-height: 14px; color: rgb(220, 220, 220); transform: scaleX(0.9); transform-origin: 0px 0px;">準備完了</div>
<svg class="a" style="left:60px;top:847.5px;" width="12" height="12" viewBox="0 0 12 12"><circle cx="6" cy="2.5" r="1.6" stroke="#dcdcdc" stroke-width="1" fill="none"></circle><path d="M1 5H11M6 5V8L3 11.5M6 8L9 11.5" stroke="#dcdcdc" stroke-width="1" fill="none"></path></svg>
<div class="a nw" style="left: 74px; top: 847px; font-size: 10px; line-height: 14px; color: rgb(220, 220, 220); transform: scaleX(0.7843); transform-origin: 0px 0px;">アクセシビリティ: 検討が必要です</div>
<div class="a" style="left:477px;top:846px;width:28px;height:16px;background:#555453"></div>
<svg class="a" style="left:485px;top:848.5px;" width="12" height="12" viewBox="0 0 12 12"><path d="M0.5 0.5H11.5V11.5H0.5ZM0.5 4.2H11.5M0.5 7.8H11.5M4.2 0.5V11.5M7.8 0.5V11.5" stroke="#dcdcdc" stroke-width="1" fill="none"></path></svg>
<svg class="a" style="left:514px;top:848.5px;" width="12" height="12" viewBox="0 0 12 12"><path d="M0.5 0.5H11.5V11.5H0.5ZM2.5 2.5H9.5V9.5H2.5ZM4 4.5H8M4 6H8M4 7.5H8" stroke="#cfcfcf" stroke-width="0.9" fill="none"></path></svg>
<svg class="a" style="left:544px;top:848.5px;" width="12" height="12" viewBox="0 0 12 12"><path d="M0.5 0.5H11.5V11.5H0.5ZM0.5 7H6V0.5" stroke="#cfcfcf" stroke-width="1" fill="none"></path></svg>
<div class="a" style="left:570px;top:853.5px;width:5px;height:1.0px;background:#d8d8d8"></div>
<div class="a" style="left:579px;top:853.5px;width:75px;height:1.0px;background:#bdbdbd"></div>
<div class="a" style="left:615px;top:849.5px;width:3px;height:8.5px;background:#c8c8c8"></div>
<svg class="a" style="left:657px;top:849px;" width="9" height="9" viewBox="0 0 9 9"><path d="M4.5 0.5V8.5M0.5 4.5H8.5" stroke="#d8d8d8" stroke-width="1"></path></svg>
<div class="a nw" style="left:675px;top:847.0px;font-size:10.5px;line-height:14px;color:#dedede;">100%</div>
<div class="a" style="left:451px;top:92.7px;width:263px;height:752.8px;background:#535352"></div>
<div class="a nw" style="left: 461px; top: 104px; font-size: 11.5px; line-height: 14px; color: rgb(240, 240, 240); font-weight: bold; -webkit-text-stroke: 0.4px rgb(240, 240, 240); transform: scaleX(0.7619); transform-origin: 0px 0px;">ピボットテーブルのフィールド</div>
<svg class="a" style="left:666px;top:107px;" width="11" height="7" viewBox="0 0 11 7"><path d="M1 1L5.5 5.5L10 1" stroke="#e0e0e0" stroke-width="1.1" fill="none"></path></svg>
<svg class="a" style="left:690px;top:106px;" width="9" height="9" viewBox="0 0 9 9"><path d="M0.7 0.7L8.3 8.3M8.3 0.7L0.7 8.3" stroke="#e6e6e6" stroke-width="1.1"></path></svg>
<div class="a nw" style="left: 461px; top: 128px; font-size: 10px; line-height: 14px; color: rgb(224, 224, 224); transform: scaleX(0.7131); transform-origin: 0px 0px;">レポートに追加するフィールドを選択してください:</div>
<div class="a" style="left:669px;top:125px;width:33.5px;height:20px;background:#c8c8c8"></div>
<svg class="a" style="left:675px;top:129px;" width="12" height="12" viewBox="0 0 12 12"><path d="M11.09 4.54 L11.09 7.46 L9.88 6.96 L8.78 8.88 L9.82 9.68 L7.28 11.14 L7.11 9.84 L4.89 9.84 L4.72 11.14 L2.18 9.68 L3.22 8.88 L2.12 6.96 L0.91 7.46 L0.91 4.54 L2.12 5.04 L3.22 3.12 L2.18 2.32 L4.72 0.86 L4.89 2.16 L7.11 2.16 L7.28 0.86 L9.82 2.32 L8.78 3.12 L9.88 5.04Z" stroke="#4a4a4a" stroke-width="0.9" fill="none" stroke-linejoin="round"></path><circle cx="6" cy="6" r="1.7" stroke="#4a4a4a" stroke-width="0.9" fill="none"></circle></svg>
<svg class="a" style="left:691px;top:133px;" width="7" height="4" viewBox="0 0 7 4"><path d="M0.5 0.5L3.5 3.5L6.5 0.5" stroke="#555" stroke-width="1" fill="none"></path></svg>
<div class="a" style="left:461px;top:157px;width:241.5px;height:16.5px;background:#c3c3c3"></div>
<div class="a nw" style="left:466px;top:158.0px;font-size:9.5px;line-height:14px;color:#666;">検索</div>
<svg class="a" style="left:687px;top:159px;" width="12" height="12" viewBox="0 0 12 12"><circle cx="7" cy="5" r="3.6" stroke="#444" stroke-width="1.1" fill="none"></circle><path d="M4.5 7.5L1.2 10.8" stroke="#444" stroke-width="1.2"></path></svg>
<div class="a" style="left:461.3px;top:188.5px;width:241.5px;height:278.0px;background:#c1c1c1"></div>
<div class="a" style="left:464.5px;top:191.6px;width:9.5px;height:9.5px;background:#3fae69;border-radius:1px"></div>
<svg class="a" style="left:465.5px;top:192.9px;" width="8" height="7" viewBox="0 0 8 7"><path d="M1 3.5L3.2 5.7L7 1.2" stroke="#fff" stroke-width="1.1" fill="none"></path></svg>
<div class="a nw" style="left:478.6px;top:189.4px;font-size:10px;line-height:14px;color:#1e1e1e;font-weight:bold;letter-spacing:-0.6px">取引先名称</div>
<div class="a" style="left:464.5px;top:207.36px;width:9.5px;height:9.5px;border:1px solid #a8a8a8;background:#c6c6c6;border-radius:1px"></div>
<div class="a nw" style="left:478.6px;top:205.16px;font-size:10px;line-height:14px;color:#3a3a3a;letter-spacing:-0.6px">日付</div>
<div class="a" style="left:464.5px;top:223.12px;width:9.5px;height:9.5px;border:1px solid #a8a8a8;background:#c6c6c6;border-radius:1px"></div>
<div class="a nw" style="left:478.6px;top:220.92px;font-size:10px;line-height:14px;color:#3a3a3a;letter-spacing:-0.6px">会計番号</div>
<div class="a" style="left:464.5px;top:238.88px;width:9.5px;height:9.5px;border:1px solid #a8a8a8;background:#c6c6c6;border-radius:1px"></div>
<div class="a nw" style="left:478.6px;top:236.68px;font-size:10px;line-height:14px;color:#3a3a3a;letter-spacing:-0.6px">伝票番号</div>
<div class="a" style="left:464.5px;top:254.64px;width:9.5px;height:9.5px;border:1px solid #a8a8a8;background:#c6c6c6;border-radius:1px"></div>
<div class="a nw" style="left:478.6px;top:252.44px;font-size:10px;line-height:14px;color:#3a3a3a;letter-spacing:-0.6px">取引詳細</div>
<div class="a" style="left:464.5px;top:270.4px;width:9.5px;height:9.5px;border:1px solid #a8a8a8;background:#c6c6c6;border-radius:1px"></div>
<div class="a nw" style="left:478.6px;top:268.2px;font-size:10px;line-height:14px;color:#3a3a3a;letter-spacing:-0.6px">取引金額</div>
<div class="a" style="left:464.5px;top:286.16px;width:9.5px;height:9.5px;border:1px solid #a8a8a8;background:#c6c6c6;border-radius:1px"></div>
<div class="a nw" style="left:478.6px;top:283.96px;font-size:10px;line-height:14px;color:#3a3a3a;letter-spacing:-0.6px">備考</div>
<div class="a" style="left:464.5px;top:301.92px;width:9.5px;height:9.5px;border:1px solid #a8a8a8;background:#c6c6c6;border-radius:1px"></div>
<div class="a nw" style="left:478.6px;top:299.72px;font-size:10px;line-height:14px;color:#3a3a3a;letter-spacing:-0.6px">月 (日付)</div>
<div class="a" style="left:464.5px;top:317.68px;width:9.5px;height:9.5px;border:1px solid #a8a8a8;background:#c6c6c6;border-radius:1px"></div>
<div class="a nw" style="left:478.6px;top:315.48px;font-size:10px;line-height:14px;color:#3a3a3a;letter-spacing:-0.6px">四半期 (日付)</div>
<div class="a" style="left:464.5px;top:333.44px;width:9.5px;height:9.5px;background:#3fae69;border-radius:1px"></div>
<svg class="a" style="left:465.5px;top:334.74px;" width="8" height="7" viewBox="0 0 8 7"><path d="M1 3.5L3.2 5.7L7 1.2" stroke="#fff" stroke-width="1.1" fill="none"></path></svg>
<div class="a nw" style="left:478.6px;top:331.24px;font-size:10px;line-height:14px;color:#1e1e1e;font-weight:bold;letter-spacing:-0.6px">年 (日付)</div>
<div class="a nw" style="left: 463px; top: 347px; font-size: 10px; line-height: 14px; color: rgb(58, 58, 58); transform: scaleX(0.7697); transform-origin: 0px 0px;">その他のテーブル...</div>
<div class="a" style="left:461px;top:479px;width:243px;height:1px;border-top:1px dotted #888"></div>
<div class="a nw" style="left: 463px; top: 482.5px; font-size: 10px; line-height: 14px; color: rgb(224, 224, 224); transform: scaleX(0.6714); transform-origin: 0px 0px;">次のボックス間でフィールドをドラッグしてください:</div>
<svg class="a" style="left:465.5px;top:509.5px;" width="9" height="8" viewBox="0 0 9 8"><path d="M0.5 0.5H8.5L5.3 4V7.5L3.7 6.5V4Z" fill="#e6e6e6"></path></svg>
<div class="a nw" style="left: 479px; top: 506.6px; font-size: 10px; line-height: 14px; color: rgb(230, 230, 230); transform: scaleX(0.64); transform-origin: 0px 0px;">フィルター</div>
<svg class="a" style="left:587.5px;top:509.5px;" width="8" height="8" viewBox="0 0 8 8"><path d="M1 0.5V7.5M4 0.5V7.5M7 0.5V7.5" stroke="#e6e6e6" stroke-width="1.6"></path></svg>
<div class="a nw" style="left:601.6px;top:506.6px;font-size:10px;line-height:14px;color:#e6e6e6;">列</div>
<div class="a" style="left:462.3px;top:523px;width:115.4px;height:128px;background:#c1c1c1"></div>
<div class="a" style="left:584px;top:523px;width:118.6px;height:128px;background:#c1c1c1"></div>
<div class="a" style="left:585px;top:525px;width:116.5px;height:16px;background:#c9c9c9;border:1px solid #8e8e8e"></div>
<div class="a nw" style="left:590px;top:526.0px;font-size:10px;line-height:14px;color:#222;letter-spacing:-0.5px">年 (日付)</div>
<svg class="a" style="left:691px;top:531px;" width="6" height="4" viewBox="0 0 6 4"><path d="M0.5 0.5L3 3L5.5 0.5" stroke="#444" stroke-width="1" fill="none"></path></svg>
<svg class="a" style="left:465.5px;top:662.5px;" width="8" height="8" viewBox="0 0 8 8"><path d="M0.5 1H7.5M0.5 4H7.5M0.5 7H7.5" stroke="#e6e6e6" stroke-width="1.6"></path></svg>
<div class="a nw" style="left:479px;top:659.7px;font-size:10px;line-height:14px;color:#e6e6e6;">行</div>
<div class="a nw" style="left:587.5px;top:659.7px;font-size:10px;line-height:14px;color:#e6e6e6;font-weight:bold">Σ</div>
<div class="a nw" style="left:601.6px;top:659.7px;font-size:10px;line-height:14px;color:#e6e6e6;">値</div>
<div class="a" style="left:462.3px;top:676px;width:115.4px;height:128.6px;background:#c1c1c1"></div>
<div class="a" style="left:584px;top:676px;width:118.6px;height:128.6px;background:#c1c1c1"></div>
<div class="a" style="left:463px;top:678px;width:114px;height:15.5px;background:#c9c9c9;border:1px solid #8e8e8e"></div>
<div class="a nw" style="left:468px;top:678.7px;font-size:10px;line-height:14px;color:#222;letter-spacing:-0.6px">取引先名称</div>
<svg class="a" style="left:565px;top:684px;" width="6" height="4" viewBox="0 0 6 4"><path d="M0.5 0.5L3 3L5.5 0.5" stroke="#444" stroke-width="1" fill="none"></path></svg>
<div class="a" style="left:465px;top:824px;width:9px;height:9.5px;background:#bdbdbd;border-radius:1px"></div>
<div class="a nw" style="left: 479px; top: 822px; font-size: 10px; line-height: 14px; color: rgb(224, 224, 224); transform: scaleX(0.7538); transform-origin: 0px 0px;">レイアウトの更新を保留する</div>
<div class="a" style="left:676px;top:820px;width:26.6px;height:17px;background:#6d6d6c"></div>
<div class="a nw" style="left:680px;top:821.5px;font-size:9.5px;line-height:14px;color:#9e9e9e;">更新</div>
<div class="a" style="left:451px;top:92.7px;width:1px;height:752.8px;background:#454544"></div>
</div>
<div id="tb" class="a">
<svg class="a" style="left:12px;top:8px;" width="22" height="19" viewBox="0 0 22 19"><circle cx="14" cy="7" r="5" fill="#f5a524"></circle><path d="M4 17.5H16A4 4 0 0 0 16 9.5A5.5 5.5 0 0 0 6 10.5A3.5 3.5 0 0 0 4 17.5Z" fill="#7fb6ea" stroke="#5d9bd8" stroke-width="0.6"></path></svg>
<div class="a nw" style="left:37.5px;top:7.0px;font-size:8.5px;line-height:12px;color:#333;font-weight:bold">14°C</div>
<div class="a nw" style="left: 37.5px; top: 18.5px; font-size: 9px; line-height: 12px; color: rgb(68, 68, 68); transform: scaleX(0.7698); transform-origin: 0px 0px;">くもりのち晴れ</div>
<svg class="a" style="left:511.5px;top:10.3px;" width="19" height="18" viewBox="0 0 19 18"><rect x="0" y="0" width="8.8" height="8.3" fill="#2a8de0"></rect><rect x="10" y="0" width="8.8" height="8.3" fill="#35a3ee"></rect><rect x="0" y="9.5" width="8.8" height="8.3" fill="#1f7fd6"></rect><rect x="10" y="9.5" width="8.8" height="8.3" fill="#2b97e8"></rect></svg>
<div class="a" style="left:540px;top:7.8px;width:163px;height:22.2px;background:#f4eded;border-radius:11px;border:1px solid #e0d2d2"></div>
<svg class="a" style="left:548px;top:13px;" width="11" height="12" viewBox="0 0 11 12"><circle cx="5" cy="5" r="3.8" stroke="#222" stroke-width="1.3" fill="none"></circle><path d="M7.8 7.8L10.5 10.8" stroke="#222" stroke-width="1.4"></path></svg>
<div class="a nw" style="left:567px;top:13.0px;font-size:10px;line-height:12px;color:#666;">検索</div>
<svg class="a" style="left:665px;top:10px;" width="36" height="16" viewBox="0 0 36 16"><path d="M1 9A5.5 5.5 0 0 1 12 9Z" fill="#f3c21b"></path><rect x="0" y="9" width="13" height="2" fill="#e0a800"></rect><path d="M15 2V8A4 4 0 0 0 23 8V2M19 12V14A3 3 0 0 0 25 14" stroke="#6b4fb8" stroke-width="1.4" fill="none"></path><circle cx="25" cy="12" r="1.6" fill="#6b4fb8"></circle><ellipse cx="30" cy="11.5" rx="5" ry="3.2" fill="#5a3a25"></ellipse><ellipse cx="25.5" cy="12.5" rx="4" ry="2.5" fill="#7a5238"></ellipse></svg>
<svg class="a" style="left:712px;top:13px;" width="19" height="15" viewBox="0 0 19 15"><rect x="6" y="0" width="12" height="10" fill="#f0f0f0" stroke="#cfcfcf" stroke-width="0.5"></rect><rect x="0" y="4" width="12" height="10" fill="#1e1e1e"></rect><rect x="6" y="4" width="6" height="6" fill="#bdbdbd"></rect></svg>
<svg class="a" style="left:746px;top:5px;" width="24" height="24" viewBox="0 0 24 24"><circle cx="10" cy="13" r="9.5" fill="#e33b2e"></circle><path d="M10 13L1.8 17.8A9.5 9.5 0 0 0 14.5 21.3Z" fill="#2da94f"></path><path d="M10 13L14.5 21.3A9.5 9.5 0 0 0 18.4 8.5Z" fill="#fbc116"></path><circle cx="10" cy="13" r="4.3" fill="#fff"></circle><circle cx="10" cy="13" r="3.3" fill="#1a73e8"></circle><circle cx="18" cy="6" r="5.5" fill="#3ea0e6"></circle></svg>
<div class="a" style="left:763px;top:8.5px;width:4px;height:3.0px;background:#fff;border-radius:2px"></div>
<svg class="a" style="left:778.5px;top:7px;" width="20" height="21" viewBox="0 0 20 21"><rect x="0" y="0" width="20" height="21" fill="#21d789"></rect><path d="M0 0H14L20 6V0Z" fill="#fcf84a"></path><path d="M0 21V8L8 21Z" fill="#087cfa"></path><rect x="3" y="3" width="14" height="15" fill="#000"></rect><text x="4.2" y="11" font-size="6.5" fill="#fff" font-weight="bold" font-family="Liberation Sans">PC</text><rect x="4.5" y="14" width="5" height="1.2" fill="#fff"></rect></svg>
<svg class="a" style="left:812px;top:5px;" width="24" height="24" viewBox="0 0 24 24"><circle cx="10" cy="13" r="9.5" fill="#e33b2e"></circle><path d="M10 13L1.8 17.8A9.5 9.5 0 0 0 14.5 21.3Z" fill="#2da94f"></path><path d="M10 13L14.5 21.3A9.5 9.5 0 0 0 18.4 8.5Z" fill="#fbc116"></path><circle cx="10" cy="13" r="4.3" fill="#fff"></circle><circle cx="10" cy="13" r="3.3" fill="#1a73e8"></circle><circle cx="18" cy="6" r="5.5" fill="#f06a1c"></circle><text x="18" y="8.5" font-size="7" fill="#fff" text-anchor="middle" font-family="Liberation Sans">k</text></svg>
<svg class="a" style="left:843.5px;top:8px;" width="21" height="19" viewBox="0 0 21 19"><path d="M0 2A1.5 1.5 0 0 1 1.5 0.5H7L9 2.5H19.5A1.5 1.5 0 0 1 21 4V17A1.5 1.5 0 0 1 19.5 18.5H1.5A1.5 1.5 0 0 1 0 17Z" fill="#f7c535"></path><rect x="0" y="6" width="21" height="12.5" rx="1" fill="#ffd75a"></rect><rect x="5" y="12" width="11" height="4" fill="#1b78d4"></rect></svg>
<div class="a" style="left:873px;top:4.5px;width:28px;height:29.5px;background:#f4ecec;border-radius:4px"></div>
<svg class="a" style="left:877.5px;top:8px;" width="20" height="19" viewBox="0 0 20 19"><rect x="5" y="0" width="15" height="19" rx="1.5" fill="#1d9a55"></rect><rect x="5" y="0" width="15" height="6" fill="#33c481"></rect><rect x="5" y="12.5" width="15" height="6.5" fill="#107c41"></rect><rect x="0" y="4" width="11" height="11" rx="1.3" fill="#107c41"></rect><path d="M3 6.8L8 12.2M8 6.8L3 12.2" stroke="#fff" stroke-width="1.5"></path></svg>
<div class="a" style="left:881.5px;top:32px;width:11.5px;height:2px;background:#1a6fd0;border-radius:1px"></div>
<svg class="a" style="left:911px;top:7px;" width="18" height="21" viewBox="0 0 18 21"><rect x="1" y="3" width="13" height="17" rx="1.5" fill="#e8eef8" stroke="#9db2d6" stroke-width="1"></rect><path d="M3.5 8H11M3.5 11H11M3.5 14H9" stroke="#9db2d6" stroke-width="0.9"></path><path d="M9 15L16 2L17.5 3L10.5 16Z" fill="#5c4033"></path><path d="M15.5 2.5L16.5 0.8L18 2L17.2 3.5Z" fill="#f08ab0"></path></svg>
<div class="a" style="left:754.5px;top:31px;width:5.0px;height:1.5px;background:#8c8484;border-radius:1px"></div>
<div class="a" style="left:786.0px;top:31px;width:5.0px;height:1.5px;background:#8c8484;border-radius:1px"></div>
<div class="a" style="left:821.0px;top:31px;width:5.0px;height:1.5px;background:#8c8484;border-radius:1px"></div>
<div class="a" style="left:851.5px;top:31px;width:5.0px;height:1.5px;background:#8c8484;border-radius:1px"></div>
<div class="a" style="left:917.0px;top:31px;width:5.0px;height:1.5px;background:#8c8484;border-radius:1px"></div>
<svg class="a" style="left:1150px;top:15px;" width="9" height="6" viewBox="0 0 9 6"><path d="M0.8 5L4.5 1.2L8.2 5" stroke="#222" stroke-width="1.1" fill="none"></path></svg>
<svg class="a" style="left:1171.5px;top:12px;" width="13" height="13" viewBox="0 0 13 13"><path d="M4 1L6.5 2.5L4 4L1.5 2.5Z M9 1L11.5 2.5L9 4L6.5 2.5Z M4 4.5L6.5 6L4 7.5L1.5 6Z M9 4.5L11.5 6L9 7.5L6.5 6Z" fill="#222"></path><rect x="0" y="6.5" width="6.5" height="6.5" fill="#d81e3a"></rect><text x="3.2" y="12" font-size="5.5" fill="#fff" text-anchor="middle" font-family="Liberation Sans" font-weight="bold">1</text></svg>
<svg class="a" style="left:1195.5px;top:13px;" width="13" height="11" viewBox="0 0 13 11"><path d="M3 9.5H10.5A2.5 2.5 0 0 0 10.5 4.5A4 4 0 0 0 3 4A2.8 2.8 0 0 0 3 9.5Z" stroke="#222" stroke-width="1.1" fill="none"></path><path d="M1 1L12 10.5" stroke="#222" stroke-width="1.1"></path></svg>
<svg class="a" style="left:1222px;top:12.5px;" width="9" height="13" viewBox="0 0 9 13"><rect x="2.5" y="0.5" width="4" height="8" rx="2" fill="#2f64c9"></rect><path d="M1 6A3.5 3.5 0 0 0 8 6M4.5 9.5V12.5M2.5 12.5H6.5" stroke="#2f64c9" stroke-width="1" fill="none"></path></svg>
<div class="a nw" style="left:1246px;top:13.0px;font-size:11px;line-height:12px;color:#c0b8b8;">A</div>
<svg class="a" style="left:1272px;top:12px;" width="13" height="13" viewBox="0 0 13 13"><circle cx="6" cy="6.5" r="5.5" fill="#1e6fd0"></circle><circle cx="10" cy="10" r="2.2" fill="#e84a2a"></circle><circle cx="9" cy="11.5" r="1.2" fill="#f5b400"></circle></svg>
<svg class="a" style="left:1301px;top:13px;" width="12" height="10" viewBox="0 0 12 10"><path d="M0.5 3.5A8 8 0 0 1 11.5 3.5M2.3 5.5A5.3 5.3 0 0 1 9.7 5.5M4.1 7.5A2.6 2.6 0 0 1 7.9 7.5" stroke="#222" stroke-width="1" fill="none"></path><circle cx="6" cy="9" r="0.9" fill="#222"></circle></svg>
<svg class="a" style="left:1318.5px;top:12.5px;" width="13" height="12" viewBox="0 0 13 12"><path d="M1 4H3.5L7 1V11L3.5 8H1Z" stroke="#222" stroke-width="1" fill="none"></path><path d="M9 3.5A3.5 3.5 0 0 1 9 8.5M10.5 2A5.5 5.5 0 0 1 10.5 10" stroke="#222" stroke-width="1" fill="none"></path></svg>
<svg class="a" style="left:1337px;top:12px;" width="12" height="13" viewBox="0 0 12 13"><rect x="0.5" y="3.5" width="8" height="6" stroke="#222" stroke-width="1" fill="none"></rect><path d="M2 1V3.5M5 1V3.5" stroke="#222" stroke-width="1"></path><path d="M8 8L11.5 11.5L9 12.5Z" fill="#222"></path></svg>
<div class="a nw" style="left:1362px;top:7.2px;font-size:9.5px;line-height:12px;color:#2a2a2a;width:46px;text-align:right">10:49</div>
<div class="a nw" style="left:1362px;top:19.0px;font-size:9.5px;line-height:12px;color:#2a2a2a;width:46px;text-align:right;letter-spacing:-0.3px">2024/11/23</div>
<svg class="a" style="left:1413.5px;top:12.5px;" width="11" height="13" viewBox="0 0 11 13"><path d="M5.5 0.8A3.8 3.8 0 0 0 1.7 4.6V8.5L0.5 10.5H10.5L9.3 8.5V4.6A3.8 3.8 0 0 0 5.5 0.8Z" fill="#0f4fb3"></path><path d="M4 11.3A1.5 1.5 0 0 0 7 11.3" fill="#0f4fb3" stroke="#0f4fb3" stroke-width="0.8"></path></svg>
</div>
<div id="cam" class="a" style="left:1443px;top:406px;width:477px;height:268px;background:#c9cdc6;overflow:hidden">
<svg class="a" style="left:0;top:0" width="477" height="268" viewBox="0 0 477 268">
<defs>
 <filter id="bl" x="-5%" y="-5%" width="110%" height="110%"><feGaussianBlur stdDeviation="0.9"></feGaussianBlur></filter>
 <linearGradient id="wall" x1="0" y1="0" x2="1" y2="0.3"><stop offset="0" stop-color="#d3d9d2"></stop><stop offset="1" stop-color="#dfe3dd"></stop></linearGradient><linearGradient id="beam" x1="0" y1="0" x2="1" y2="0"><stop offset="0" stop-color="#e2dac8"></stop><stop offset="1" stop-color="#cbc5b6"></stop></linearGradient>
 <linearGradient id="door" x1="0" y1="0" x2="1" y2="1"><stop offset="0" stop-color="#e6e2d4"></stop><stop offset="1" stop-color="#e2ddcf"></stop></linearGradient>
 <linearGradient id="shade" x1="0" y1="0" x2="0" y2="1"><stop offset="0" stop-color="#000" stop-opacity="0"></stop><stop offset="1" stop-color="#000" stop-opacity="0.42"></stop></linearGradient>
 <radialGradient id="face" cx="0.55" cy="0.45" r="0.6"><stop offset="0" stop-color="#d2b8a8"></stop><stop offset="1" stop-color="#b09080"></stop></radialGradient>
</defs>
<g filter="url(#bl)">
<rect x="0" y="0" width="477" height="268" fill="url(#wall)"></rect>
<path d="M0 0H20L0 63Z" fill="#aeb2a8"></path>
<!-- frame outer -->
<path d="M99 18L440.7 15.5L477 142V268H59Z" fill="#ddd6c6"></path>
<path d="M99 18L440.7 15.5L442 20L101 22.5Z" fill="#ebe6da"></path>
<path d="M101 22.5L442 20L430 31L112 36Z" fill="url(#beam)"></path>
<path d="M99 18L102 22L62 268H59Z" fill="#d4cfc2"></path>
<path d="M440.7 15.5L477 142V206L430 31Z" fill="#d5cfc0"></path>
<!-- opening -->
<path d="M112 36L430 31L477 206V268H73.5Z" fill="url(#door)"></path>
<path d="M108 32L434 28L430 32L112 37Z" fill="#b4b4ac" opacity="0.8"></path>
<path d="M112 36L73.5 268H76L114 36Z" fill="#b6b2a6"></path>
<path d="M430 31L477 206V211L428 31Z" fill="#8a877e"></path>
<path d="M278 36L292.5 268H296L281 36Z" fill="#f1ede3"></path>
<path d="M276.5 36L291 268H292.5L278 36Z" fill="#c6c2b6"></path>
<path d="M114 36H278L292.5 268H76Z" fill="#e0dbcb" opacity="0.5"></path>
<!-- headrest -->
<path d="M162 206Q162 201.5 167 201.5H197V244H162Z" fill="#1b1b1b"></path>
<!-- red chair -->
<path d="M87 268L104 247Q110 240 124 239L168 238.5L172 268Z" fill="#8a1b1f"></path>
<!-- neck -->
<path d="M196 196L258 176L264 216L238 232L200 226Z" fill="#b69787"></path>
<path d="M240 186L258 176L264 216L246 224Z" fill="#a48676"></path>
<!-- jacket -->
<path d="M119 268L150 250L169 236L196 218L214 214L240 212L266 210L290 232L331 243L360 258L374 268Z" fill="#215a79"></path>
<path d="M266 210L290 232L331 243L360 258L374 268H306L282 238Z" fill="#26617f"></path>
<!-- shirt -->
<path d="M196 226L214 218L262 213L268 216L262 232L246 250L236 268H206L200 250Z" fill="#5d1f27"></path>
<path d="M198 244L214 243L213 249L200 250Z" fill="#9a8a8c" opacity="0.7"></path>
<!-- zipper -->
<path d="M164 252L222 254L287 231" stroke="#e2483c" stroke-width="1.8" fill="none"></path>
<path d="M222 254L234 268" stroke="#e2483c" stroke-width="1.6" fill="none"></path>
<!-- face -->
<path d="M170 122Q186 108 212 106Q246 106 258 126L264 150L262 176L252 190L238 200L222 212L205 212L192 202L186 190L183 180L181 170L179 164L172 156L166 142Z" fill="#c9ab9b"></path>
<path d="M214 112Q244 110 256 130L262 170L248 192L232 204L238 160Z" fill="#bc9d8d"></path>
<path d="M176 150Q186 140 198 146L204 170L188 176Z" fill="#d2b8a9"></path>
<!-- ear -->
<path d="M250 136Q263 128 267 140L266 160Q262 168 252 166Z" fill="#c19f8d"></path>
<!-- hair -->
<path d="M168 134Q166 112 182 100Q204 88 230 90Q250 96 258 112L262 134L256 137L250 122Q238 116 222 116Q204 118 194 122L180 124L172 140Z" fill="#3a3a3a"></path>
<path d="M228 96Q248 100 257 114L261 134L254 136L250 120Q240 108 226 104Z" fill="#6e6e6e"></path>
<path d="M238 112Q250 116 256 128L254 136L248 126Z" fill="#8a8a8a"></path>
<!-- glasses -->
<ellipse cx="169.8" cy="152" rx="10.3" ry="10" stroke="#3a2a25" stroke-width="1.5" fill="none"></ellipse>
<ellipse cx="192" cy="140.5" rx="18.5" ry="12.6" stroke="#3a2a25" stroke-width="1.6" fill="none"></ellipse>
<path d="M210.5 131.5L252 133.3" stroke="#707070" stroke-width="1.2"></path>
<!-- brows/eyes/mouth -->
<path d="M184 127L200 124" stroke="#4a3a35" stroke-width="1.8"></path>
<path d="M186 138L197 137" stroke="#3a2a25" stroke-width="1.8"></path>
<path d="M184 180Q195 176 205 182" stroke="#8a5a50" stroke-width="2.4" fill="none"></path>
<path d="M177 162Q181 168 188 166" stroke="#9a7a6a" stroke-width="1.2" fill="none"></path>
<!-- earbud -->
<path d="M261 147.6L241.2 171" stroke="#1a1a1a" stroke-width="3.2" stroke-linecap="round"></path>
<path d="M243 168.5L241 171" stroke="#e8e8e8" stroke-width="1.6"></path>
</g>
<rect x="0" y="228" width="477" height="40" fill="url(#shade)"></rect>
</svg>
<div class="a nw" style="left:11px;top:239px;font-size:19px;line-height:24px;color:#f4f4f4;letter-spacing:-0.5px;text-shadow:0 0 2px rgba(0,0,0,0.35)">小川慶一</div>
</div>

</body></html>
